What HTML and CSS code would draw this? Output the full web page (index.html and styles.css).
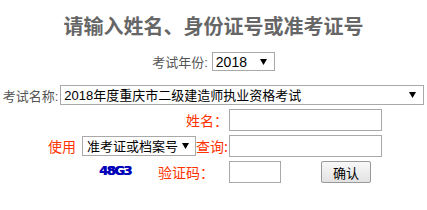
FILE: index.html
```html
<!DOCTYPE html>
<html lang="zh-CN">
<head>
    <meta charset="UTF-8">
    <title>成绩查询</title>
    <link rel="stylesheet" href="styles.css">
</head>
<body>
    <div class="page">
        <h1 class="title">请输入姓名、身份证号或准考证号</h1>

        <div class="line year-line">
            <label>考试年份:</label>
            <select class="sel sel-year">
                <option>2018</option>
                <option>2017</option>
            </select>
        </div>

        <div class="line exam-line">
            <label>考试名称:</label>
            <select class="sel sel-exam">
                <option>2018年度重庆市二级建造师执业资格考试</option>
            </select>
        </div>

        <div class="form">
            <div class="cell-left red">姓名：</div>
            <div class="cell-right"><input type="text" class="txt txt-long"></div>

            <div class="cell-left">
                <span class="red use">使用</span>
                <select class="sel sel-type">
                    <option>准考证或档案号</option>
                    <option>身份证号</option>
                </select><span class="red">查询:</span>
            </div>
            <div class="cell-right"><input type="text" class="txt txt-long"></div>

            <div class="cell-left captcha-cell">
                <span class="captcha">48G3</span>
                <span class="red">验证码：</span>
            </div>
            <div class="cell-right">
                <input type="text" class="txt txt-short">
                <button class="btn">确认</button>
            </div>
        </div>
    </div>
</body>
</html>
```

FILE: styles.css
```css
body {
    margin: 0;
    background: #fff;
    font-family: "Liberation Sans", "Noto Sans CJK SC", sans-serif;
    font-size: 13px;
    color: #555;
}
.page {
    width: 427px;
}
.title {
    margin: 13px 0 0;
    text-align: center;
    font-family: "Noto Sans CJK SC", sans-serif;
    font-size: 20px;
    line-height: 26px;
    font-weight: bold;
    color: #666;
}
.line {
    display: flex;
    justify-content: center;
    align-items: center;
    white-space: nowrap;
}
.year-line {
    margin-top: 13px;
    gap: 4px;
}
.exam-line {
    margin-top: 14px;
    gap: 2px;
}
.sel {
    -webkit-appearance: none;
    appearance: none;
    box-sizing: border-box;
    border: 1px solid #a9a9a9;
    border-radius: 0;
    background: #fff url("data:image/svg+xml,%3Csvg xmlns='http://www.w3.org/2000/svg' width='7' height='6'%3E%3Cpath d='M0 0H7L3.5 6Z' fill='%23000'/%3E%3C/svg%3E") no-repeat right 7px center;
    color: #000;
    font-family: "Liberation Sans", "Noto Sans CJK SC", sans-serif;
    padding: 0 0 0 3px;
    margin: 0;
    outline: none;
}
.sel-year {
    width: 63px;
    height: 19px;
    font-size: 14px;
}
.sel-exam {
    width: 364px;
    height: 20px;
    font-size: 13px;
}
.sel-type {
    width: 114px;
    height: 20px;
    font-size: 13px;
    padding-left: 4px;
    background-position: right 6px center;
}
.form {
    display: grid;
    grid-template-columns: 229px auto;
    row-gap: 4px;
    margin-top: 4px;
}
.cell-left {
    display: flex;
    justify-content: flex-end;
    align-items: center;
    height: 22px;
    padding-right: 1px;
    white-space: nowrap;
    font-family: "Noto Sans CJK SC", sans-serif;
    font-size: 14px;
}
.cell-right {
    display: flex;
    align-items: center;
    height: 22px;
}
.red {
    color: #ff3300;
}
.use {
    margin-right: 6px;
}
.captcha-cell {
    justify-content: flex-start;
    padding-left: 99px;
}
.captcha {
    width: 33px;
    margin-right: 26px;
    margin-top: -4px;
    font-family: "DejaVu Sans", sans-serif;
    font-weight: bold;
    font-size: 13px;
    letter-spacing: -1.5px;
    color: #0000b8;
    text-shadow: 0.6px 0 0 #0000b8;
}
.txt {
    box-sizing: border-box;
    height: 22px;
    border: 1px solid #a9a9a9;
    border-radius: 0;
    padding: 0 2px;
    margin: 0;
    outline: none;
}
.txt-long {
    width: 153px;
}
.txt-short {
    width: 52px;
}
.btn {
    box-sizing: border-box;
    width: 50px;
    height: 22px;
    margin: 0 0 0 40px;
    padding: 0;
    border: 1px solid #999;
    border-radius: 2px;
    background: linear-gradient(#f8f8f8, #e2e2e2);
    color: #000;
    font-family: "Noto Sans CJK SC", sans-serif;
    font-size: 13px;
}
```
